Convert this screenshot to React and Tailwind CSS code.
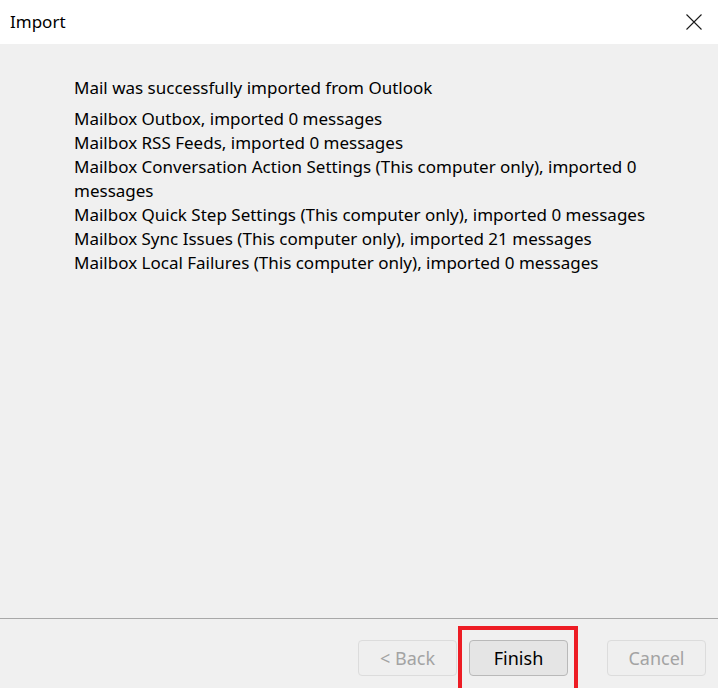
const results = [
  'Mailbox Outbox, imported 0 messages',
  'Mailbox RSS Feeds, imported 0 messages',
  'Mailbox Conversation Action Settings (This computer only), imported 0 messages',
  'Mailbox Quick Step Settings (This computer only), imported 0 messages',
  'Mailbox Sync Issues (This computer only), imported 21 messages',
  'Mailbox Local Failures (This computer only), imported 0 messages',
];

function DialogButton({ children, disabled }) {
  return (
    <button
      type="button"
      disabled={disabled}
      className={
        disabled
          ? 'h-[36px] w-[99px] rounded-[4px] border border-[#dcdcdc] bg-[#efefef] text-[18px] text-[#a3a3a3]'
          : 'h-[36px] w-[99px] rounded-[4px] border border-[#b9b9b9] bg-[#e5e5e5] text-[18px] text-black'
      }
    >
      {children}
    </button>
  );
}

export default function App() {
  return (
    <div
      className="flex h-[688px] w-[718px] flex-col overflow-hidden bg-[#f0f0f0]"
      style={{ fontFamily: '"Segoe UI", "Noto Sans", sans-serif' }}
    >
      <div className="flex h-[44px] shrink-0 items-center justify-between bg-white pl-[10px] pr-[16px]">
        <span className="text-[17px] text-black">Import</span>
        <svg width="16" height="16" viewBox="0 0 16 16" className="text-[#1a1a1a]">
          <path d="M0.5 0.5 L15.5 15.5 M15.5 0.5 L0.5 15.5" stroke="currentColor" strokeWidth="1.1" fill="none" />
        </svg>
      </div>

      <div className="flex-1 pl-[74px] pr-[60px] pt-[32px] text-[17px] leading-[24px] text-black">
        <p className="mb-[7px]">Mail was successfully imported from Outlook</p>
        {results.map((line) => (
          <p key={line}>{line}</p>
        ))}
      </div>

      <div className="h-px shrink-0 bg-[#a8a8a8]" />
      <div className="flex h-[69px] shrink-0 items-start justify-end pr-[12px] pt-[21px]">
        <DialogButton disabled>&lt; Back</DialogButton>
        <div className="relative ml-[12px]">
          <DialogButton>Finish</DialogButton>
          <div className="pointer-events-none absolute -left-[11px] -right-[10px] -top-[14px] h-[70px] border-[4px] border-[#ed1c24]" />
        </div>
        <div className="ml-[39px]">
          <DialogButton disabled>Cancel</DialogButton>
        </div>
      </div>
    </div>
  );
}
